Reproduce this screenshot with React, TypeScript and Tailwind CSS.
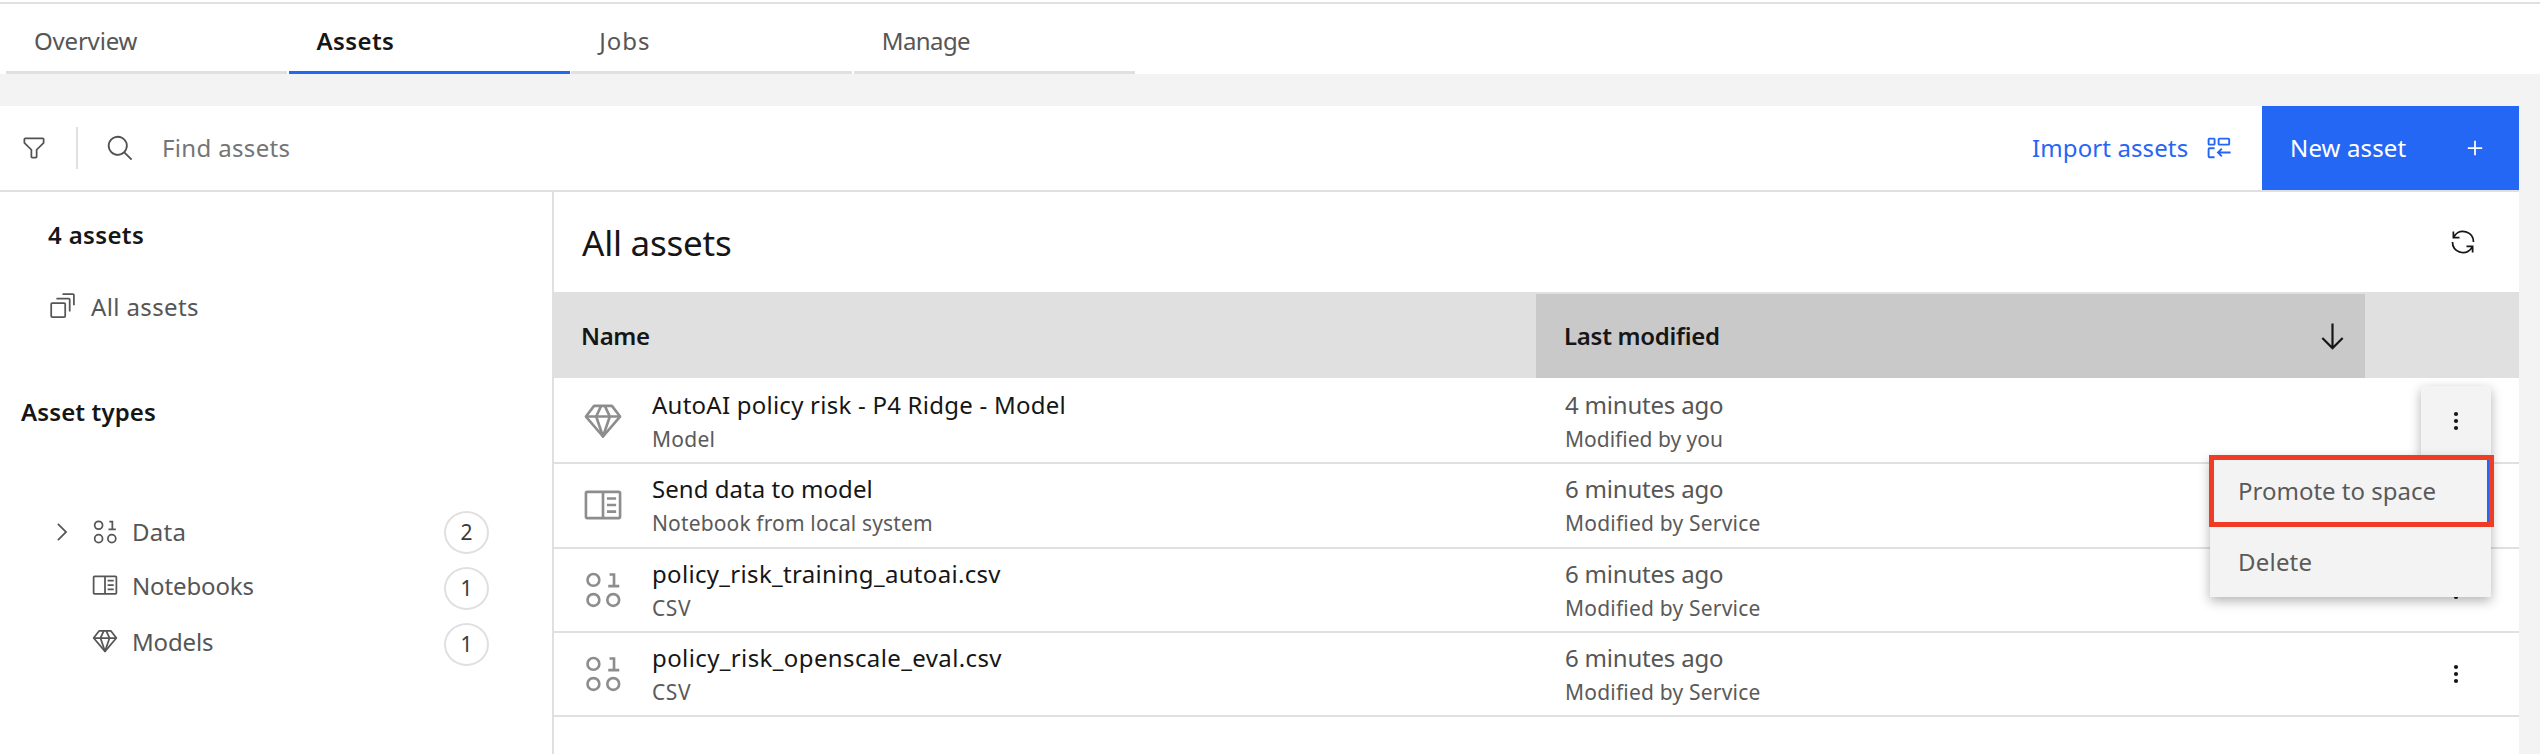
import React from 'react';

type IconProps = { className?: string };

function FilterIcon({ className }: IconProps) {
  return (
    <svg viewBox="0 0 32 32" fill="currentColor" className={className}>
      <path d="M18 28h-4a2 2 0 0 1-2-2v-7.59L4.59 11A2 2 0 0 1 4 9.59V6a2 2 0 0 1 2-2h20a2 2 0 0 1 2 2v3.59a2 2 0 0 1-.59 1.41L20 18.41V26a2 2 0 0 1-2 2ZM6 6v3.59l8 8V26h4v-8.41l8-8V6Z" />
    </svg>
  );
}

function SearchIcon({ className }: IconProps) {
  return (
    <svg viewBox="0 0 32 32" fill="currentColor" className={className}>
      <path d="m29 27.586-7.552-7.552a11.018 11.018 0 1 0-1.414 1.414L27.586 29ZM4 13a9 9 0 1 1 9 9 9.01 9.01 0 0 1-9-9Z" />
    </svg>
  );
}

function ImportIcon({ className }: IconProps) {
  return (
    <svg viewBox="0 0 28 28" fill="none" stroke="currentColor" strokeWidth="1.9" className={className}>
      <rect x="2.6" y="4.6" width="6" height="6" rx="0.9" />
      <rect x="12.6" y="4.6" width="10.6" height="6" rx="0.9" />
      <path d="M8.6 14.3H3.6a1 1 0 0 0-1 1v6.9a1 1 0 0 0 1 1h5" />
      <path d="M24.6 18.5H12M15.8 14.7 12 18.5l3.8 3.8" />
    </svg>
  );
}

function PlusIcon({ className }: IconProps) {
  return (
    <svg viewBox="0 0 32 32" fill="currentColor" className={className}>
      <path d="M17 15V7.8h-2V15H7.8v2H15v7.2h2V17h7.2v-2Z" />
    </svg>
  );
}

function RenewIcon({ className }: IconProps) {
  return (
    <svg viewBox="0 0 32 32" fill="currentColor" className={className}>
      <path d="M12 10H6.78A11 11 0 0 1 27 16h2A13 13 0 0 0 6 7.68V4H4v8h8ZM20 22h5.22A11 11 0 0 1 5 16H3a13 13 0 0 0 23 8.32V28h2v-8h-8Z" />
    </svg>
  );
}

function ArrowDownIcon({ className }: IconProps) {
  return (
    <svg viewBox="0 0 32 32" fill="currentColor" className={className}>
      <path d="M24.59 16.59 17 24.17V4h-2v20.17l-7.59-7.58L6 18l10 10 10-10Z" />
    </svg>
  );
}

function ChevronRightIcon({ className }: IconProps) {
  return (
    <svg viewBox="0 0 32 32" fill="currentColor" className={className}>
      <path d="M22 16 12 26l-1.4-1.4 8.6-8.6-8.6-8.6L12 6Z" />
    </svg>
  );
}

function StackIcon({ className }: IconProps) {
  return (
    <svg viewBox="0 0 28 28" fill="none" stroke="currentColor" strokeWidth="1.75" className={className}>
      <rect x="3.2" y="12" width="14" height="14" rx="1" />
      <path d="M8.4 7.5H20.7a1 1 0 0 1 1 1V20.6" />
      <path d="M14.5 3.1H24.9a1 1 0 0 1 1 1V14.3" />
    </svg>
  );
}

function DataIcon({ className }: IconProps) {
  return (
    <svg viewBox="0 0 32 32" fill="none" stroke="currentColor" strokeWidth="2" className={className}>
      <circle cx="8.7" cy="8.3" r="4.5" />
      <circle cx="8.7" cy="23.6" r="4.5" />
      <circle cx="23.8" cy="23.6" r="4.5" />
      <path d="M21 4.2h3.4V13M20 13h8.4" />
    </svg>
  );
}

function NotebookIcon({ className }: IconProps) {
  return (
    <svg viewBox="0 0 32 32" fill="currentColor" className={className}>
      <path d="M19 10h7v2h-7ZM19 15h7v2h-7ZM19 20h7v2h-7Z" />
      <path d="M28 5H4a2 2 0 0 0-2 2v18a2 2 0 0 0 2 2h24a2 2 0 0 0 2-2V7a2 2 0 0 0-2-2ZM4 7h11v18H4Zm13 18V7h11v18Z" />
    </svg>
  );
}

function ModelIcon({ className }: IconProps) {
  return (
    <svg
      viewBox="0 0 32 32"
      fill="none"
      stroke="currentColor"
      strokeWidth="2"
      strokeLinejoin="round"
      className={className}
    >
      <path d="M9.2 4.5h13.6L29 12.6 16 27.8 3 12.6Z" />
      <path d="M3 12.6h26M14.6 4.5l-3.8 8.1L16 27.8l5.2-15.2-3.8-8.1" />
    </svg>
  );
}

function OverflowIcon({ className }: IconProps) {
  return (
    <svg viewBox="0 0 28 28" fill="currentColor" className={className}>
      <circle cx="14" cy="7" r="2.1" />
      <circle cx="14" cy="14" r="2.1" />
      <circle cx="14" cy="21" r="2.1" />
    </svg>
  );
}

const tabs = [
  { label: 'Overview', active: false, tracking: 'tracking-[-0.19px]' },
  { label: 'Assets', active: true, tracking: 'tracking-[0.38px]' },
  { label: 'Jobs', active: false, tracking: 'tracking-[1px]' },
  { label: 'Manage', active: false, tracking: 'tracking-[-0.6px]' },
];

const assetTypes = [
  { label: 'Data', count: 2, Icon: DataIcon, expandable: true, tracking: 'tracking-[0.28px]', shift: '' },
  { label: 'Notebooks', count: 1, Icon: NotebookIcon, expandable: false, tracking: 'tracking-[-0.13px]', shift: 'pb-1' },
  { label: 'Models', count: 1, Icon: ModelIcon, expandable: false, tracking: 'tracking-[-0.16px]', shift: 'pb-1' },
];

const rows = [
  {
    name: 'AutoAI policy risk - P4 Ridge - Model',
    nameTracking: 'tracking-[0.24px]',
    kind: 'Model',
    kindTracking: 'tracking-[0.25px]',
    Icon: ModelIcon,
    modified: '4 minutes ago',
    by: 'Modified by you',
    byTracking: 'tracking-[0px]',
    size: 'h-[86px] pt-[10px]',
  },
  {
    name: 'Send data to model',
    nameTracking: 'tracking-[0.04px]',
    kind: 'Notebook from local system',
    kindTracking: 'tracking-[0.14px]',
    Icon: NotebookIcon,
    modified: '6 minutes ago',
    by: 'Modified by Service',
    byTracking: 'tracking-[0.2px]',
    size: 'h-[85px] pt-2',
  },
  {
    name: 'policy_risk_training_autoai.csv',
    nameTracking: 'tracking-[0.32px]',
    kind: 'CSV',
    kindTracking: 'tracking-[0.6px]',
    Icon: DataIcon,
    modified: '6 minutes ago',
    by: 'Modified by Service',
    byTracking: 'tracking-[0.2px]',
    size: 'h-[84px] pt-2',
  },
  {
    name: 'policy_risk_openscale_eval.csv',
    nameTracking: 'tracking-[0.39px]',
    kind: 'CSV',
    kindTracking: 'tracking-[0.6px]',
    Icon: DataIcon,
    modified: '6 minutes ago',
    by: 'Modified by Service',
    byTracking: 'tracking-[0.2px]',
    size: 'h-[84px] pt-2',
  },
];

function Tabs() {
  return (
    <nav className="mt-[2px] flex h-[72px] gap-[1.6px] border-t-2 border-t-[#e0e0e0] bg-white pl-[6px]">
      {tabs.map((tab) => (
        <button
          key={tab.label}
          className={
            tab.active
              ? 'flex h-[70px] w-[281px] items-center border-b-[3px] border-[#2567f5] pl-7 pt-[6px] text-left font-semibold text-[#161616]'
              : 'flex h-[70px] w-[281px] items-center border-b-[3px] border-[#e0e0e0] pl-7 pt-[6px] text-left text-[#565656]'
          }
        >
          <span className={tab.tracking}>{tab.label}</span>
        </button>
      ))}
    </nav>
  );
}

function Toolbar() {
  return (
    <div className="flex h-[86px] border-b-2 border-[#e0e0e0]">
      <div className="flex flex-1 items-center pl-5">
        <FilterIcon className="size-7 text-[#525252]" />
        <div className="ml-7 h-[42px] w-[2px] bg-[#e0e0e0]" />
        <SearchIcon className="ml-7 size-[29px] text-[#525252]" />
        <span className="ml-[27px] tracking-[0.34px] text-[#757575]">Find assets</span>
      </div>
      <button className="flex items-center pr-[28px] text-[#2567f5]">
        <span className="w-[174px] text-left tracking-[0.11px]">Import assets</span>
        <ImportIcon className="size-7" />
      </button>
      <button className="flex w-[257px] items-center justify-between bg-[#2567f5] pl-[28px] pr-[30px] text-white">
        <span className="tracking-[0.14px]">New asset</span>
        <PlusIcon className="size-7" />
      </button>
    </div>
  );
}

function Sidebar() {
  return (
    <aside className="flex w-[554px] shrink-0 flex-col border-r-2 border-[#e0e0e0] pt-[25px]">
      <h3 className="pl-12 font-semibold leading-9 tracking-[0.36px] text-[#161616]">4 assets</h3>
      <div className="mt-9 flex h-9 items-center pl-12 text-[#565656]">
        <StackIcon className="mb-[5px] size-7" />
        <span className="ml-[15px] tracking-[0.38px]">All assets</span>
      </div>
      <h3 className="mt-[69px] pl-[21px] font-semibold leading-9 tracking-[0.12px] text-[#161616]">Asset types</h3>
      <ul className="mt-[74px] flex flex-col">
        {assetTypes.map(({ label, count, Icon, expandable, tracking, shift }) => (
          <li key={label} className="flex h-14 items-center pl-12 pr-[63px] text-[#565656]">
            <span className="size-7">{expandable && <ChevronRightIcon className="size-7" />}</span>
            <span className={'flex flex-1 items-center pl-[15px] ' + shift}>
              <Icon className={expandable ? 'size-7' : 'mb-[3px] size-7'} />
              <span className={'ml-[13px] ' + tracking}>{label}</span>
            </span>
            <span className="flex h-[43px] w-[45px] items-center justify-center rounded-[50%] border-2 border-[#e0e0e0] text-[21px] leading-none text-[#393939]">
              {count}
            </span>
          </li>
        ))}
      </ul>
    </aside>
  );
}

function ActionsMenu() {
  return (
    <div className="absolute right-7 top-[8px] flex w-[281px] flex-col items-end">
      <button className="flex size-[70px] items-center justify-center bg-[#f3f3f3] shadow-[0_4px_11px_rgba(0,0,0,0.3)]">
        <OverflowIcon className="size-7 text-[#161616]" />
      </button>
      <div className="flex w-full flex-col bg-[#f3f3f3] text-[#5a5a5a] shadow-[0_4px_11px_rgba(0,0,0,0.3)]">
        <button className="-ml-px -mr-[3px] -mt-px flex h-[72px] w-[285px] items-center border-[5px] border-[#ee3d24] pl-6 text-left">
          <span className="flex-1">Promote to space</span>
          <span className="h-full w-[2px] bg-[#2567f5]" />
        </button>
        <button className="flex h-[70px] items-center pl-7 text-left">
          <span className="tracking-[0.21px]">Delete</span>
        </button>
      </div>
    </div>
  );
}

function AssetTable() {
  return (
    <section className="flex flex-1 flex-col">
      <div className="flex h-[100px] items-center justify-between pl-7 pr-[42px] text-[#161616]">
        <h2 className="text-[35px] leading-none tracking-[-0.24px]">All assets</h2>
        <RenewIcon className="size-7" />
      </div>
      <div className="flex h-[86px] border-t-2 border-[#e0e0e0] bg-[#e0e0e0] font-semibold text-[#161616]">
        <div className="flex w-[982px] items-center pl-[27px] tracking-[-0.37px]">Name</div>
        <div className="flex w-[829px] items-center justify-between bg-[#c9c9c9] pl-7 pr-[15px]">
          <span className="tracking-[-0.28px]">Last modified</span>
          <ArrowDownIcon className="size-[35px]" />
        </div>
      </div>
      <div className="relative">
        {rows.map(({ name, nameTracking, kind, kindTracking, Icon, modified, by, byTracking, size }) => (
          <div key={name} className={'flex border-b-2 border-[#e0e0e0] ' + size}>
            <div className="flex w-[982px] pl-7">
              <Icon className="mt-[12px] size-[42px] text-[#8d8d8d]" />
              <div className="ml-[28px] leading-[34px]">
                <div className={'text-[#161616] ' + nameTracking}>{name}</div>
                <div className={'text-[21px] text-[#5a5a5a] ' + kindTracking}>{kind}</div>
              </div>
            </div>
            <div className="flex-1 pl-[29px] leading-[34px] text-[#565656]">
              <div className="tracking-[-0.2px]">{modified}</div>
              <div className={'text-[21px] text-[#5a5a5a] ' + byTracking}>{by}</div>
            </div>
            <button className="mr-[49px] mt-[19px] size-7">
              <OverflowIcon className="size-7 text-[#161616]" />
            </button>
          </div>
        ))}
        <ActionsMenu />
      </div>
    </section>
  );
}

export default function App() {
  return (
    <div className="h-[754px] w-[2540px] overflow-hidden bg-white font-['Noto_Sans',sans-serif] text-[24px] leading-9">
      <Tabs />
      <div className="h-[680px] bg-[#f3f3f3] pr-[21px] pt-[32px]">
        <main className="flex h-full flex-col bg-white">
          <Toolbar />
          <div className="flex flex-1">
            <Sidebar />
            <AssetTable />
          </div>
        </main>
      </div>
    </div>
  );
}
